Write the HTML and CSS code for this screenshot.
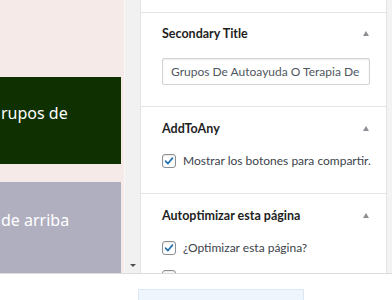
FILE: index.html
```html
<!DOCTYPE html>
<html lang="es">
  <head>
    <meta charset="UTF-8" />
    <meta name="viewport" content="width=device-width, initial-scale=1.0" />
    <title>Editar entrada</title>
    <link rel="stylesheet" href="styles.css">
  </head>
  <body>
    <div class="editor">
      <div class="canvas">
        <div class="canvas-inner">
          <div class="block block-green">
            <p>rupos de</p>
          </div>
          <div class="block block-grey">
            <p>de arriba</p>
          </div>
        </div>
        <div class="scrollbar">
          <span class="scroll-arrow"></span>
        </div>
      </div>

      <div class="sidebar">
        <div class="panel panel-top"></div>

        <div class="panel">
          <div class="panel-header">
            <h2>Secondary Title</h2>
            <span class="toggle"></span>
          </div>
          <div class="panel-body">
            <input class="text-input" type="text" value="Grupos De Autoayuda O Terapia De Grupo" />
          </div>
        </div>

        <div class="panel">
          <div class="panel-header">
            <h2>AddToAny</h2>
            <span class="toggle"></span>
          </div>
          <div class="panel-body panel-body-check">
            <label class="check-row">
              <span class="checkbox checked">
                <svg viewBox="0 0 14 14" width="14" height="14"><path d="M3 7.2 L5.8 10 L11 3.6" fill="none" stroke="#2271b1" stroke-width="2" stroke-linecap="round" stroke-linejoin="round"/></svg>
              </span>
              Mostrar los botones para compartir.
            </label>
          </div>
        </div>

        <div class="panel">
          <div class="panel-header">
            <h2>Autoptimizar esta página</h2>
            <span class="toggle"></span>
          </div>
          <div class="panel-body panel-body-check">
            <label class="check-row">
              <span class="checkbox checked">
                <svg viewBox="0 0 14 14" width="14" height="14"><path d="M3 7.2 L5.8 10 L11 3.6" fill="none" stroke="#2271b1" stroke-width="2" stroke-linecap="round" stroke-linejoin="round"/></svg>
              </span>
              ¿Optimizar esta página?
            </label>
            <label class="check-row">
              <span class="checkbox"></span>
            </label>
          </div>
        </div>
      </div>

      <div class="edge"></div>
    </div>

    <div class="footer">
      <div class="notice"></div>
    </div>
  </body>
</html>
```

FILE: styles.css
```css
body {
  font-family: Lato, "Noto Sans", Arial, sans-serif;
  margin: 0;
  padding: 0;
  background-color: #fff;
  color: #1e1e1e;
  width: 392px;
  height: 300px;
  overflow: hidden;
}
.editor {
  display: flex;
  height: 273px;
  overflow: hidden;
}
.canvas {
  display: flex;
  width: 140px;
  flex-shrink: 0;
  background-color: #f6eae9;
}
.canvas-inner {
  width: 121px;
  padding-top: 77px;
  display: flex;
  flex-direction: column;
  gap: 18px;
  border-right: 3px solid #f6eae9;
}
.block {
  display: flex;
  flex-shrink: 0;
  align-items: center;
  color: #fff;
  font-family: "Noto Sans", Arial, sans-serif;
  font-size: 16px;
}
.block p {
  margin: 0;
  padding-left: 1px;
}
.block-green {
  height: 87px;
  background-color: #0f3101;
}
.block-green p {
  margin-bottom: 16px;
}
.block-grey {
  height: 100px;
  background-color: #b0afc0;
  align-items: flex-start;
}
.block-grey p {
  margin-top: 27px;
}
.scrollbar {
  width: 15px;
  background-color: #f1f1f1;
  border-left: 1px solid #fbf7f7;
  display: flex;
  align-items: flex-end;
  justify-content: center;
  padding-bottom: 6px;
}
.scroll-arrow {
  width: 0;
  height: 0;
  border-left: 3px solid transparent;
  border-right: 3px solid transparent;
  border-top: 3px solid #505050;
}
.sidebar {
  width: 245px;
  flex-shrink: 0;
  background-color: #fff;
  border-left: 1px solid #e2e4e7;
  border-right: 1px solid #e2e4e7;
}
.edge {
  flex: 1;
  background-color: #f3f3f4;
}
.panel {
  border-bottom: 1px solid #e2e4e7;
  padding: 0 16px 0 21px;
}
.panel-top {
  height: 12px;
}
.panel-header {
  height: 43px;
  display: flex;
  align-items: center;
  justify-content: space-between;
}
.panel-header h2 {
  margin: 0;
  font-size: 12.5px;
  font-weight: 700;
  color: #1e1e1e;
}
.panel-top + .panel .panel-header {
  height: 41px;
  padding-top: 0;
}
.panel-top + .panel .panel-body {
  padding-top: 2px;
}
.toggle {
  width: 0;
  height: 0;
  margin-right: 1px;
  border-left: 3.5px solid transparent;
  border-right: 3.5px solid transparent;
  border-bottom: 5px solid #8c8f94;
}
.panel-body {
  padding-bottom: 21px;
}
.panel-body .text-input {
  margin-top: 2px;
}
.panel-body-check {
  padding-top: 3px;
  padding-bottom: 25px;
  display: flex;
  flex-direction: column;
  gap: 15px;
}
.text-input {
  display: block;
  box-sizing: border-box;
  width: 208px;
  height: 27px;
  padding: 0 8px;
  border: 1px solid #d0d2d5;
  border-radius: 2px;
  box-shadow: inset 0 1px 2px rgba(0, 0, 0, 0.07);
  font-family: Lato, "Noto Sans", Arial, sans-serif;
  font-size: 12px;
  color: #50575e;
  background-color: #fff;
}
.check-row {
  display: flex;
  align-items: center;
  gap: 7px;
  font-size: 12px;
  color: #3c434a;
  white-space: nowrap;
}
.checkbox {
  width: 14px;
  height: 14px;
  box-sizing: border-box;
  border: 1px solid #8c8f94;
  border-radius: 3px;
  background-color: #fff;
  box-shadow: inset 0 1px 2px rgba(0, 0, 0, 0.1);
  display: flex;
  align-items: center;
  justify-content: center;
  flex-shrink: 0;
}
.checkbox svg {
  display: block;
}
.footer {
  height: 26px;
  border-top: 1px solid #dcdcde;
  background-color: #fff;
  display: flex;
  align-items: flex-end;
  padding-left: 138px;
}
.notice {
  width: 164px;
  height: 10px;
  background-color: #eef5fc;
  border: 1px solid #dbe8f6;
  border-bottom: none;
}
```
